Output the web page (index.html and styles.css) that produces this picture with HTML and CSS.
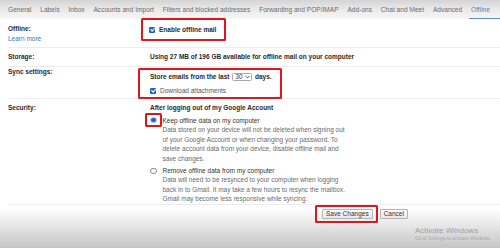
FILE: index.html
```html
<!DOCTYPE html>
<html>
<head>
<meta charset="utf-8">
<link rel="stylesheet" href="styles.css">
</head>
<body>
<div class="page">
  <nav class="tabs">
    <span class="tab">General</span>
    <span class="tab">Labels</span>
    <span class="tab">Inbox</span>
    <span class="tab">Accounts and Import</span>
    <span class="tab">Filters and blocked addresses</span>
    <span class="tab">Forwarding and POP/IMAP</span>
    <span class="tab">Add-ons</span>
    <span class="tab">Chat and Meet</span>
    <span class="tab">Advanced</span>
    <span class="tab active">Offline</span>
  </nav>

  <div class="settings">
    <div class="row row-offline">
      <div class="label">Offline:<span class="link">Learn more</span></div>
      <div class="value">
        <div class="hl hl-offline">
          <span class="cb"></span><b>Enable offline mail</b>
        </div>
      </div>
    </div>

    <div class="row row-storage">
      <div class="label">Storage:</div>
      <div class="value"><b>Using 27 MB of 196 GB available for offline mail on your computer</b></div>
    </div>

    <div class="row row-sync">
      <div class="label">Sync settings:</div>
      <div class="value">
        <div class="hl hl-sync">
          <div class="line"><b>Store emails from the last</b><span class="select">30<svg class="chev" viewBox="0 0 6 4" width="5" height="4"><path d="M0.7 0.8 L3 3.1 L5.3 0.8" fill="none" stroke="#333" stroke-width="1.1"/></svg></span><b>days.</b></div>
          <div class="line line-dl"><span class="cb"></span><span class="muted">Download attachments</span></div>
        </div>
      </div>
    </div>

    <div class="row row-security">
      <div class="label">Security:</div>
      <div class="value">
        <b class="sec-head">After logging out of my Google Account</b>
        <div class="option">
          <div class="hl hl-radio"><span class="radio on"></span></div>
          <div class="opt-text">
            <div class="opt-title">Keep offline data on my computer</div>
            <div class="desc">Data stored on your device will not be deleted when signing out of your Google Account or when changing your password. To delete account data from your device, disable offline mail and save changes.</div>
          </div>
        </div>
        <div class="option option-2">
          <div class="radio-slot"><span class="radio"></span></div>
          <div class="opt-text">
            <div class="opt-title">Remove offline data from my computer</div>
            <div class="desc">Data will need to be resynced to your computer when logging back in to Gmail. It may take a few hours to resync the mailbox. Gmail may become less responsive while syncing.</div>
          </div>
        </div>
      </div>
    </div>
  </div>

  <div class="actions">
    <div class="hl hl-save"><button class="btn">Save Changes</button></div>
    <button class="btn">Cancel</button>
  </div>

  <div class="watermark">
    <div class="wm-title">Activate Windows</div>
    <div class="wm-sub">Go to Settings to activate Windows.</div>
  </div>
</div>
</body>
</html>
```

FILE: styles.css
```css
* { box-sizing: border-box; }

html, body {
  margin: 0;
  padding: 0;
}

body {
  font-family: "Liberation Sans", Arial, sans-serif;
  font-size: 6.5px;
  color: #222;
  width: 500px;
  height: 248px;
  overflow: hidden;
}

.page {
  position: relative;
  width: 500px;
  height: 248px;
  background: linear-gradient(#ffffff 0, #ffffff 208px, #e6e6e6 226px, #c4c4c4 248px);
}

.tabs {
  display: flex;
  gap: 8.8px;
  height: 19px;
  padding-left: 8px;
  align-items: center;
  white-space: nowrap;
  background: linear-gradient(#d4d4d4 0, #e9e9e9 9px, #f7f7f7 19px);
  font-size: 6.6px;
  color: #6a6a6a;
  overflow: hidden;
}

.tab {
  position: relative;
  line-height: 19px;
  flex: none;
}

.tab.active {
  color: #4d86c6;
}

.tab.active::after {
  content: "";
  position: absolute;
  left: -2px;
  right: -10px;
  bottom: 0;
  height: 1.5px;
  background: #5a8fca;
}

.settings {
  padding-left: 8px;
}

.row {
  display: grid;
  grid-template-columns: 142px 1fr;
  border-bottom: 1px solid #ededed;
  line-height: 9.5px;
}

.label {
  font-weight: bold;
  color: #2a2a2a;
  display: flex;
  flex-direction: column;
}

.link {
  font-weight: normal;
  color: #3a78c0;
}

b { font-weight: bold; color: #2a2a2a; }

.muted { color: #555; }

.hl {
  border: 2px solid #e3141b;
  border-radius: 1.5px;
}

/* Row 1 */
.row-offline {
  height: 29px;
  padding-top: 5px;
}

.hl-offline {
  display: inline-flex;
  align-items: center;
  gap: 4px;
  height: 23px;
  margin-top: -6px;
  margin-left: -9px;
  padding: 0 8px 0 6px;
  white-space: nowrap;
}

.cb {
  display: inline-block;
  width: 6px;
  height: 6px;
  border-radius: 1px;
  background: #1a66c9;
  position: relative;
  flex: none;
}

.cb::after {
  content: "";
  position: absolute;
  left: 1.9px;
  top: 0.6px;
  width: 1.6px;
  height: 3.2px;
  border: solid #fff;
  border-width: 0 1px 1px 0;
  transform: rotate(45deg);
}

/* Row 2 */
.row-storage {
  height: 19px;
  padding-top: 4px;
}

/* Row 3 */
.row-sync {
  height: 32px;
}

.hl-sync {
  margin-left: -12px;
  margin-top: 1px;
  width: 144px;
  height: 31px;
  padding: 2px 0 0 10px;
  white-space: nowrap;
}

.line {
  display: flex;
  align-items: center;
  gap: 3px;
  height: 9.5px;
}

.line-dl {
  margin-top: 4.5px;
  gap: 4px;
}

.select {
  display: inline-flex;
  align-items: center;
  gap: 2px;
  height: 8.5px;
  padding: 0 1.5px 0 2px;
  border: 1px solid #a8a8a8;
  border-radius: 1.5px;
  color: #333;
  font-size: 6.3px;
  background: #fff;
}

/* Row 4 */
.row-security {
  height: 106px;
  padding-top: 4px;
}

.sec-head {
  display: block;
}

.option {
  display: flex;
  align-items: flex-start;
}

.hl-radio {
  width: 17px;
  height: 14px;
  margin-left: -5px;
  margin-top: 0.5px;
  display: flex;
  align-items: center;
  justify-content: center;
  flex: none;
}

.radio-slot {
  width: 17px;
  margin-left: -5px;
  margin-top: 2px;
  display: flex;
  justify-content: center;
  flex: none;
}

.radio {
  display: block;
  width: 6.5px;
  height: 6.5px;
  border-radius: 50%;
  border: 0.8px solid #8a8a8a;
  background: #fff;
}

.radio.on {
  border: 1.2px solid #b9d2f2;
  background: #1a66c9;
}

.opt-text {
  padding-left: 0.5px;
  width: 187px;
  margin-top: 3px;
}

.opt-title {
  color: #333;
}

.desc {
  color: #6a6a6a;
}

.option-2 {
  margin-top: 2.5px;
}

.option-2 .opt-text {
  margin-top: 0;
}

/* Actions */
.actions {
  display: flex;
  align-items: center;
  gap: 2px;
  padding-left: 315px;
}

.hl-save {
  padding: 2px 3px 2px 5px;
  height: 18px;
  display: flex;
  align-items: center;
}

.btn {
  font-family: "Liberation Sans", Arial, sans-serif;
  font-size: 6.5px;
  color: #333;
  height: 10px;
  padding: 0 3px;
  line-height: 8px;
  white-space: nowrap;
  border: 1px solid #b5b5b5;
  border-radius: 1px;
  background: linear-gradient(#fafafa, #e8e8e8);
}

.watermark {
  position: absolute;
  left: 415px;
  top: 226px;
  color: #a3a3a3;
  white-space: nowrap;
}

.wm-title {
  font-family: "Liberation Sans", Arial, sans-serif;
  font-size: 8px;
  line-height: 9px;
  color: #9f9f9f;
}

.wm-sub {
  font-size: 4.8px;
  line-height: 7px;
  color: #ababab;
}
```
